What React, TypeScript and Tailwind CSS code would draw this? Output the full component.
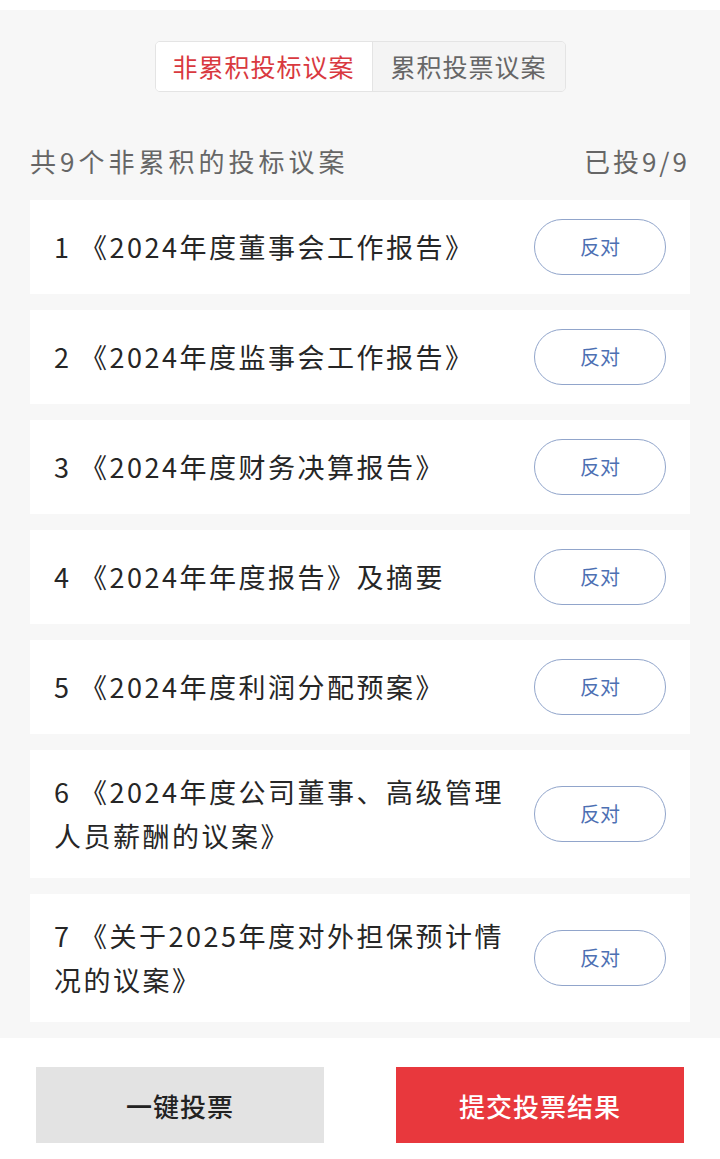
// only the seven proposals visible above the footer are listed
const proposals = [
  "《2024年度董事会工作报告》",
  "《2024年度监事会工作报告》",
  "《2024年度财务决算报告》",
  "《2024年年度报告》及摘要",
  "《2024年度利润分配预案》",
  "《2024年度公司董事、高级管理人员薪酬的议案》",
  "《关于2025年度对外担保预计情况的议案》",
];

const font = { fontFamily: '"Noto Sans CJK SC", "Noto Sans", sans-serif' };

export default function App() {
  return (
    <div style={font} className="flex h-[1159px] w-[720px] flex-col overflow-hidden bg-[#f7f7f7]">
      <div className="h-[10px] shrink-0 bg-white" />

      <main className="flex-1 overflow-hidden px-[30px]">
        <div className="mt-[31px] flex justify-center">
          <div className="flex h-[51px] overflow-hidden rounded-[5px] border border-[#e4e4e4]">
            <button className="w-[216px] bg-white text-[25px] tracking-[1px] text-[#d9393f]">
              非累积投标议案
            </button>
            <button className="w-[193px] border-l border-[#e4e4e4] bg-[#f4f4f4] text-[25px] tracking-[1px] text-[#666]">
              累积投票议案
            </button>
          </div>
        </div>

        <div className="mt-[48px] mb-[20px] flex h-[40px] items-center justify-between text-[26px] text-[#666]">
          <span className="tracking-[4px]">共9个非累积的投标议案</span>
          <span className="tracking-[3px]">已投9/9</span>
        </div>

        <div className="flex flex-col gap-[16px]">
          {proposals.map((title, i) => (
            <div
              key={i}
              className="flex min-h-[94px] items-center justify-between bg-white py-[20px] pl-[24px] pr-[24px]"
            >
              <p className="w-[460px] text-[27px] leading-[44px] tracking-[2.5px] text-[#262626]">
                {`${i + 1} ${title}`}
              </p>
              <button className="-my-[1px] h-[56px] w-[132px] shrink-0 rounded-full border border-[#91a5cb] text-[20px] text-[#4d70b3]">
                反对
              </button>
            </div>
          ))}
        </div>
      </main>

      <footer className="flex h-[121px] shrink-0 justify-between bg-white px-[36px] pt-[29px]">
        <button className="h-[76px] w-[288px] bg-[#e3e3e3] text-[26px] font-medium tracking-[1px] text-[#222]">
          一键投票
        </button>
        <button className="h-[76px] w-[288px] bg-[#e8383d] text-[26px] font-medium tracking-[1px] text-white">
          提交投票结果
        </button>
      </footer>
    </div>
  );
}
